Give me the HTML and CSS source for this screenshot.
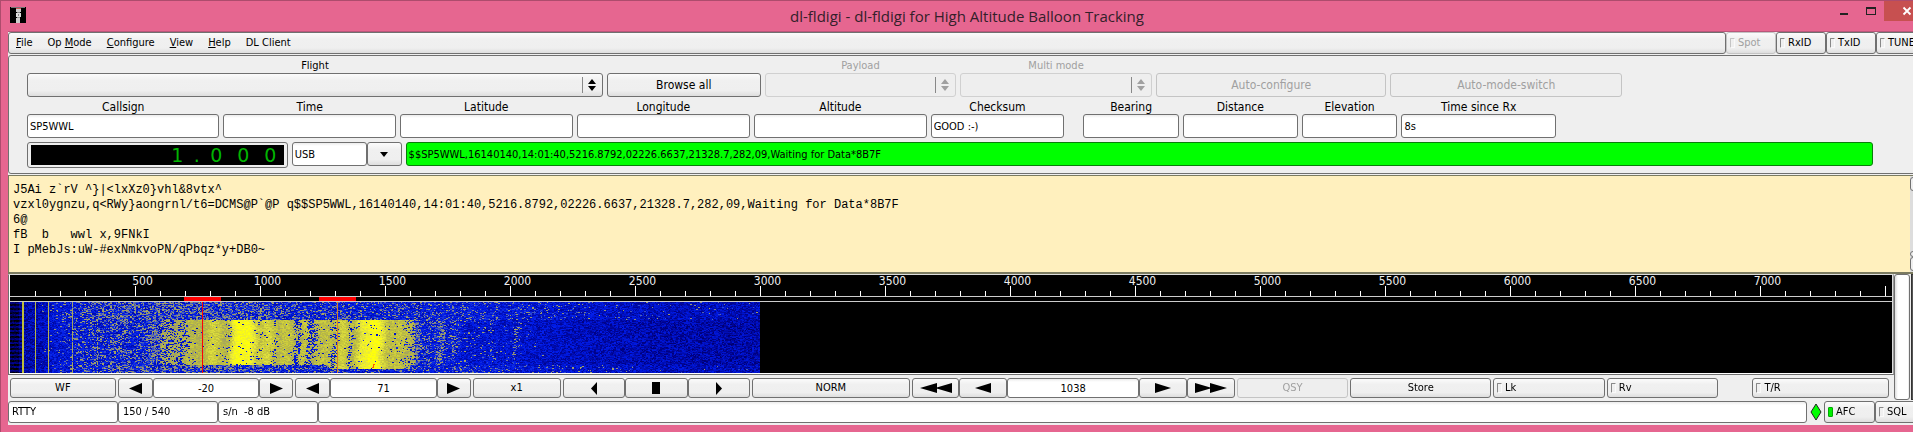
FILE: index.html
```html
<!DOCTYPE html>
<html lang="en">
<head>
<meta charset="utf-8">
<title>dl-fldigi</title>
<link rel="stylesheet" href="styles.css">
</head>
<body>
<div class="window">
  <header class="titlebar">
    <svg class="app-icon" width="16" height="16" viewBox="0 0 16 16" aria-hidden="true">
      <rect width="16" height="16" fill="#000"/>
      <rect x="1" width="14" height="1" fill="#777"/>
      <rect x="6" y="1" width="5" height="1" fill="#c55"/>
      <rect x="6" y="2" width="5" height="3" fill="#ccc"/>
      <rect x="7" y="5" width="3" height="1" fill="#888"/>
      <rect x="6" y="6" width="5" height="4" fill="#ddd"/>
      <rect x="8" y="7" width="1" height="2" fill="#888"/>
      <rect x="7" y="10" width="3" height="1" fill="#999"/>
      <rect x="6" y="11" width="4" height="5" fill="#ccc"/>
    </svg>
    <h1 class="title">dl-fldigi - dl-fldigi for High Altitude Balloon Tracking</h1>
    <div class="window-buttons">
      <button class="winbtn" aria-label="Minimize"><svg width="10" height="10" viewBox="0 0 10 10"><rect x="1" y="7" width="8" height="2" fill="#222"/></svg></button>
      <button class="winbtn" aria-label="Maximize"><svg width="10" height="10" viewBox="0 0 10 10"><path d="M0 1h10v8H0zM1 3v5h8V3z" fill="#222" fill-rule="evenodd"/></svg></button>
      <button class="winbtn close" aria-label="Close"><svg width="10" height="10" viewBox="0 0 10 10"><path d="M1.500 1.500l7 7m0-7l-7 7" stroke="#fff" stroke-width="1.800"/></svg></button>
    </div>
  </header>

  <div class="client">
    <div class="menurow">
      <nav class="menubar">
        <button class="menu"><u>F</u>ile</button>
        <button class="menu">Op <u>M</u>ode</button>
        <button class="menu"><u>C</u>onfigure</button>
        <button class="menu"><u>V</u>iew</button>
        <button class="menu"><u>H</u>elp</button>
        <button class="menu">DL Client</button>
      </nav>
      <label class="toggle disabled"><input type="checkbox" disabled>Spot</label>
      <label class="toggle"><input type="checkbox">RxID</label>
      <label class="toggle"><input type="checkbox">TxID</label>
      <label class="toggle"><input type="checkbox">TUNE</label>
    </div>

    <section class="panel">
      <div class="row flight-row">
        <div class="field small"><label for="flight">Flight</label>
          <div class="choice"><select id="flight"><option></option></select><svg class="updown" width="8" height="12" viewBox="0 0 8 12"><path d="M0 5L4 0l4 5zM0 7h8l-4 5z"/></svg></div></div>
        <button class="btn large">Browse all</button>
        <div class="field small disabled"><label for="payload">Payload</label>
          <div class="choice"><select id="payload" disabled><option></option></select><svg class="updown" width="8" height="12" viewBox="0 0 8 12"><path d="M0 5L4 0l4 5zM0 7h8l-4 5z"/></svg></div></div>
        <div class="field small disabled"><label for="multi">Multi mode</label>
          <div class="choice"><select id="multi" disabled><option></option></select><svg class="updown" width="8" height="12" viewBox="0 0 8 12"><path d="M0 5L4 0l4 5zM0 7h8l-4 5z"/></svg></div></div>
        <button class="btn large" disabled>Auto-configure</button>
        <button class="btn large" disabled>Auto-mode-switch</button>
      </div>

      <div class="row data-row">
        <div class="field"><label for="callsign">Callsign</label><input class="box" id="callsign" value="SP5WWL"></div>
        <div class="field"><label for="time">Time</label><input class="box" id="time"></div>
        <div class="field"><label for="lat">Latitude</label><input class="box" id="lat"></div>
        <div class="field"><label for="lon">Longitude</label><input class="box" id="lon"></div>
        <div class="field"><label for="alt">Altitude</label><input class="box" id="alt"></div>
        <div class="field"><label for="sum">Checksum</label><input class="box" id="sum" value="GOOD :-)"></div>
        <div class="field after-gap"><label for="bearing">Bearing</label><input class="box" id="bearing"></div>
        <div class="field"><label for="dist">Distance</label><input class="box" id="dist"></div>
        <div class="field"><label for="elev">Elevation</label><input class="box" id="elev"></div>
        <div class="field"><label for="since">Time since Rx</label><input class="box" id="since" value="8s"></div>
      </div>

      <div class="row rig-row">
        <div class="freq"><div class="digits"><span>1</span><span class="dot">.</span><span>0</span><span>0</span><span>0</span></div></div>
        <div class="combo"><input class="box" aria-label="Sideband" value="USB"><button class="btn" aria-label="Choose sideband"><svg width="8" height="5" viewBox="0 0 8 5"><path d="M0 0h8L4 5z"/></svg></button></div>
        <input class="box sentence" aria-label="Last sentence" value="$$SP5WWL,16140140,14:01:40,5216.8792,02226.6637,21328.7,282,09,Waiting for Data*8B7F">
      </div>
    </section>

    <div class="rx">
      <pre class="rx-text">J5Ai z`rV ^}|&lt;lxXz0}vhl&amp;8vtx^
vzxl0ygnzu,q&lt;RWy}aongrnl/t6=DCMS@P`@P q$$SP5WWL,16140140,14:01:40,5216.8792,02226.6637,21328.7,282,09,Waiting for Data*8B7F
6@
fB  b   wwl x,9FNkI
I pMebJs:uW-#exNmkvoPN/qPbqz*y+DB0~</pre>
      <div class="scroll"><i class="arrow"></i><i class="thumb"></i><i class="arrow"></i></div>
    </div>

    <div class="lower">
      <div class="left">
        <div class="waterfall">
          <div class="scale">
            <span>500</span><span>1000</span><span>1500</span><span>2000</span><span>2500</span><span>3000</span><span>3500</span><span>4000</span><span>4500</span><span>5000</span><span>5500</span><span>6000</span><span>6500</span><span>7000</span>
          </div>
          <div class="markers"><i></i><i></i></div>
          <canvas id="fall" width="750" height="71"></canvas>
        </div>
        <div class="controls">
          <button class="btn">WF</button>
          <div class="counter"><button class="btn" aria-label="Lower level"><svg width="13" height="11" viewBox="0 0 13 11"><path d="M0 5.500L13 0v11z"/></svg></button><input class="box" aria-label="Upper level" value="-20"><button class="btn" aria-label="Raise level"><svg width="13" height="11" viewBox="0 0 13 11"><path d="M13 5.500L0 0v11z"/></svg></button></div>
          <div class="counter"><button class="btn" aria-label="Lower range"><svg width="13" height="11" viewBox="0 0 13 11"><path d="M0 5.500L13 0v11z"/></svg></button><input class="box" aria-label="Range" value="71"><button class="btn" aria-label="Raise range"><svg width="13" height="11" viewBox="0 0 13 11"><path d="M13 5.500L0 0v11z"/></svg></button></div>
          <button class="btn">x1</button>
          <div class="shift"><button class="btn" aria-label="Left"><svg width="6" height="13" viewBox="0 0 6 13"><path d="M0 6.500L6 0v13z"/></svg></button><button class="btn" aria-label="Center"><svg width="8" height="12" viewBox="0 0 8 12"><path d="M0 0h8v12H0z"/></svg></button><button class="btn" aria-label="Right"><svg width="6" height="13" viewBox="0 0 6 13"><path d="M6 6.500L0 0v13z"/></svg></button></div>
          <button class="btn">NORM</button>
          <div class="counter wide"><button class="btn" aria-label="Much lower"><svg width="32" height="10" viewBox="0 0 32 10"><path d="M0 5L17 0v10zM15 5L32 0v10z"/></svg></button><button class="btn" aria-label="Lower"><svg width="16" height="10" viewBox="0 0 16 10"><path d="M0 5L16 0v10z"/></svg></button><input class="box" aria-label="Carrier" value="1038"><button class="btn" aria-label="Higher"><svg width="16" height="10" viewBox="0 0 16 10"><path d="M16 5L0 0v10z"/></svg></button><button class="btn" aria-label="Much higher"><svg width="32" height="10" viewBox="0 0 32 10"><path d="M32 5L15 0v10zM17 5L0 0v10z"/></svg></button></div>
          <button class="btn" disabled>QSY</button>
          <button class="btn">Store</button>
          <label class="toggle"><input type="checkbox">Lk</label>
          <label class="toggle"><input type="checkbox">Rv</label>
          <label class="toggle transmit"><input type="checkbox">T/R</label>
        </div>
      </div>
      <div class="squelch"></div>
      <div class="meter"></div>
    </div>

    <footer class="status">
      <output class="cell mode">RTTY</output>
      <output class="cell">150 / 540</output>
      <output class="cell">s/n &nbsp;-8 dB</output>
      <output class="cell message"></output>
      <svg class="diamond" width="12" height="18" viewBox="0 0 12 18"><path d="M6 1l5 8-5 8-5-8z" fill="#0f0" stroke="#222"/></svg>
      <label class="toggle"><input type="checkbox" checked>AFC</label>
      <label class="toggle"><input type="checkbox">SQL</label>
    </footer>
  </div>
</div>
<script src="waterfall.js"></script>
</body>
</html>
```
FILE: styles.css
```css
* { box-sizing: border-box; }

:root {
  --line: #707070;
  --face: #efefef;
  --up: linear-gradient(#fbfbfb, #f0f0f0 30%, #efefef 75%, #dedede);
}

body {
  margin: 0;
  overflow: hidden;
  font: 11px/14px "DejaVu Sans Condensed", "DejaVu Sans", sans-serif;
  color: #000;
}

button, input, select { font: inherit; color: inherit; margin: 0; min-width: 0; }
svg { display: block; }

/* The frame runs past the right edge of the screen. */
.window {
  width: calc(100% + 21px);
  background: #e66690;
  border: 1px solid #ad4c6d;
  padding: 0 7px 7px;
}

.titlebar {
  display: grid;
  grid-template-columns: 1fr auto 1fr;
  height: 30px;
}
.app-icon { margin: 6px 0 0 2px; }
.title {
  margin: 0;
  font: 15px/30px "Open Sans", "Noto Sans", sans-serif;
  color: #33202a;
}
.window-buttons { display: flex; justify-content: flex-end; align-items: flex-start; margin-right: -3px; }
.winbtn {
  display: flex;
  justify-content: center;
  align-items: center;
  width: 27px;
  height: 20px;
  padding: 0;
  border: 0;
  background: none;
}
.winbtn.close { width: 45px; background: #c75050; }

.client { background: var(--face); border-top: 1px solid #b9577a; padding-bottom: 2px; }

/* Shared pieces */
.btn {
  display: flex;
  justify-content: center;
  align-items: center;
  padding: 0;
  border: 1px solid var(--line);
  border-radius: 3px;
  background: var(--up);
}
.btn.large { font-size: 12px; }
.btn:disabled { color: #a0a0a0; border-color: #c4c4c4; background: #eee; }
.box {
  width: 100%;
  height: 24px;
  padding: 0 2px;
  border: 1px solid var(--line);
  border-radius: 3px;
  background: linear-gradient(#ececec, #fff 3px);
}
.toggle {
  display: flex;
  align-items: center;
  gap: 3px;
  padding-left: 3px;
  border: 1px solid var(--line);
  border-radius: 3px;
  background: var(--up);
  white-space: nowrap;
}
.toggle input {
  appearance: none;
  width: 5px;
  height: 10px;
  border: 1px solid #fafafa;
  border-top-color: #888;
  border-left-color: #888;
  border-radius: 1px;
}
.toggle input:checked { background: #00f000; border-color: #0a0; }
.toggle.disabled { color: #a0a0a0; border-color: #c4c4c4; }
.toggle.disabled input { border-top-color: #c4c4c4; border-left-color: #c4c4c4; }

/* Menu */
.menurow { display: flex; height: 22px; }
.menubar {
  flex: 1;
  display: flex;
  gap: 15px;
  padding-left: 7px;
  border: 1px solid var(--line);
  border-radius: 3px;
  background: var(--up);
}
.menu { padding: 0; border: 0; background: none; white-space: nowrap; }
.menurow .toggle { width: 50px; }

/* Flight panel */
.panel {
  display: grid;
  gap: 4px;
  margin-top: 1px;
  padding: 3px 52px 5px 18px;
  border: 1px solid var(--line);
  border-radius: 3px;
}
.row { display: grid; align-items: end; }
.field { display: grid; justify-items: center; font-size: 12px; }
.field.small { font-size: 11px; }
.field label { line-height: 14px; }
.field .box { font-size: 11px; }
.field.disabled { color: #a0a0a0; }

.flight-row { grid-template-columns: 577fr 154fr 192fr 192fr 231fr 232fr; gap: 4px; padding-right: 251px; }
.flight-row .btn, .choice { height: 24px; }
.choice { position: relative; width: 100%; }
.choice select {
  appearance: none;
  width: 100%;
  height: 24px;
  border: 1px solid var(--line);
  border-radius: 3px;
  background: var(--up);
}
.choice::after {
  content: "";
  position: absolute;
  right: 20px;
  top: 4px;
  height: 16px;
  border-left: 1px solid #888;
}
.updown { position: absolute; right: 7px; top: 6px; fill: currentColor; }
.disabled .choice select { border-color: #c4c4c4; background: #eee; }

.data-row { grid-template-columns: 193fr 173fr 173fr 174fr 173fr 134fr 111fr 115fr 96fr 155fr; gap: 4px; padding-right: 317px; }
.data-row .field label { line-height: 13px; }
.after-gap { padding-left: 15px; }

.rig-row { grid-template-columns: 261fr 110fr 1469fr; gap: 4px; align-items: start; }
.freq { height: 26px; padding: 2px 3px; border: 1px solid var(--line); border-radius: 3px; }
.digits {
  display: flex;
  justify-content: flex-end;
  height: 100%;
  background: #000;
  color: #00b400;
  font: 19px/21px "DejaVu Sans", sans-serif;
}
.digits span { width: 27px; text-align: center; }
.digits .dot { width: 12px; }
.combo { display: flex; }
.combo .btn { flex: 0 0 35px; }
.sentence { border-color: #0a7d0a; background: #0f0; }

/* Received text */
.rx {
  display: flex;
  height: 99px;
  margin-top: 1px;
  border: 1px solid #7b7b60;
  border-bottom-width: 2px;
  background: #fff0be;
}
.rx-text {
  flex: 1;
  margin: 0;
  padding: 7px 4px;
  font: 12px/15px "Liberation Mono", monospace;
}
.scroll { display: flex; flex-direction: column; width: 15px; padding: 1px 0; background: #ddd; }
.scroll i { border: 1px solid var(--line); border-radius: 3px; background: var(--face); }
.scroll .arrow { height: 14px; }
.scroll .thumb { margin-top: auto; height: 6px; }

/* Waterfall */
.lower { display: flex; padding-bottom: 1px; }
.left { flex: 1; min-width: 0; }
.waterfall {
  border: 1px solid var(--line);
  border-top-color: #ddd;
  border-right-color: #999;
  background: #000;
  box-shadow: inset 1px 0 #fff, inset 0 -1px #fff, inset -1px 0 #ddd;
  padding: 0 1px 1px;
}
.scale {
  display: flex;
  height: 22px;
  padding-left: 70px;
  border-bottom: 1px solid #ccc;
  color: #eee;
  font-size: 12px;
  line-height: 13px;
  background:
    linear-gradient(#000, #000) 0 100% / 1px 10px no-repeat,
    linear-gradient(90deg, #fff 1px, #0000 1px) 0 100% / 125px 10px repeat-x,
    linear-gradient(90deg, #fff 1px, #0000 1px) 0 100% / 25px 5px repeat-x;
}
.scale span { flex: 0 0 125px; text-align: center; }
.markers { display: flex; gap: 98px; height: 5px; padding-left: 174px; border-bottom: 1px solid #ccc; }
.markers i { width: 37px; background: #f00; }
#fall { display: block; }

.controls {
  display: grid;
  grid-template-columns: 106fr 176fr 176fr 88fr 188fr 158fr 324fr 112fr 141fr 112fr 112fr 169fr;
  gap: 2px;
  padding: 3px 5px 2px 2px;
}
.controls > * { height: 20px; }
.counter { display: grid; grid-template-columns: 35fr 107fr 34fr; }
.counter.wide { grid-template-columns: 48fr 48fr 132fr 48fr 48fr; }
.counter > *, .shift > * { height: 20px; }
.counter .box { text-align: center; }
.shift { display: grid; grid-template-columns: 1fr 1fr 1fr; }
.transmit { margin-left: 32px; }
.squelch {
  width: 16px;
  border: 1px solid var(--line);
  border-radius: 3px;
  background: linear-gradient(90deg, #ddd, #fff 3px, #fff 13px, #ddd);
}
.meter { width: 15px; margin-left: 1px; border: 1px solid #333; background: #555; }

/* Status line */
.status { display: flex; height: 22px; }
.cell {
  width: 100px;
  padding: 3px 4px;
  border: 1px solid var(--line);
  border-radius: 3px;
  background: linear-gradient(#ececec, #fff 3px);
}
.cell.mode { width: 110px; padding-left: 3px; }
.cell.message { flex: 1; }
.diamond { margin: 2px 2px 0 3px; }
.status .toggle { width: 51px; }
```
FILE: waterfall.js
```js
(function () {
  var canvas = document.getElementById('fall');
  var ctx = canvas.getContext('2d');
  var W = canvas.width, H = canvas.height;
  var image = ctx.createImageData(W, H);
  var seed = 20140601;

  function rnd() {
    seed = (seed * 1664525 + 1013904223) >>> 0;
    return seed / 4294967296;
  }

  // Signal strength to colour
  var stops = [
    [0, 0, 0, 0], [0.15, 0, 0, 130], [0.35, 0, 28, 235], [0.5, 50, 78, 205],
    [0.6, 140, 140, 125], [0.75, 190, 190, 62], [0.9, 232, 232, 60], [1, 255, 255, 10]
  ];
  function colour(v) {
    v = Math.max(0, Math.min(1, v));
    for (var i = 1; i < stops.length; i++) {
      if (v <= stops[i][0]) {
        var a = stops[i - 1], b = stops[i], t = (v - a[0]) / (b[0] - a[0]);
        return [a[1] + (b[1] - a[1]) * t, a[2] + (b[2] - a[2]) * t, a[3] + (b[3] - a[3]) * t];
      }
    }
    return [255, 255, 10];
  }

  function curve(points, x) {
    for (var i = 1; i < points.length; i++) {
      if (x <= points[i][0]) {
        var a = points[i - 1], b = points[i];
        return a[1] + (b[1] - a[1]) * (x - a[0]) / (b[0] - a[0]);
      }
    }
    return points[points.length - 1][1];
  }

  // Level of the quiet background, and how often a speckle rises out of it
  var floor = [[12, 0.22], [28, 0.24], [45, 0.31], [480, 0.33], [560, 0.29], [650, 0.26], [750, 0.25]];
  var speckle = [[28, 0], [45, 0.06], [70, 0.3], [105, 0.5], [200, 0.55], [260, 0.38], [350, 0.27],
    [420, 0.2], [480, 0.13], [560, 0.07], [640, 0.02], [750, 0.01]];
  var speckleInBand = [[28, 0], [45, 0.04], [70, 0.22], [105, 0.36], [140, 0.45], [152, 0.55],
    [165, 0.8], [185, 0.97], [388, 0.97], [402, 0.75], [410, 0.25], [450, 0.08], [500, 0.03], [540, 0]];
  // centre, half width, height
  var ridges = [[182, 8, 0.04], [203, 8, 0.13], [226, 7, 0.24], [238, 9, 0.26], [257, 7, 0.14],
    [276, 8, 0.08], [294, 5, 0.07], [314, 9, 0.07], [332, 7, 0.12], [352, 7, 0.18], [365, 9, 0.3],
    [388, 10, 0.08]];
  var density = [[287, 3, -0.6], [301, 4, -0.65], [324, 3, -0.4], [340, 2, -0.35], [172, 4, -0.35],
    [218, 3, -0.15], [249, 2, -0.1], [265, 2, -0.2], [132, 4, -0.15], [123, 3, -0.2],
    [143, 4, 0.3], [407, 3, 0.3], [418, 2, 0.25], [430, 4, 0.5], [443, 3, 0.25], [480, 2, 0.2],
    [505, 3, 0.35]];

  function bumps(list, x) {
    var sum = 0;
    for (var i = 0; i < list.length; i++) {
      var d = (x - list[i][0]) / list[i][1];
      if (d > -3 && d < 3) sum += list[i][2] * Math.exp(-d * d);
    }
    return sum;
  }

  function put(x, y, c) {
    var p = (y * W + x) * 4;
    image.data[p] = c[0];
    image.data[p + 1] = c[1];
    image.data[p + 2] = c[2];
    image.data[p + 3] = 255;
  }

  for (var y = 0; y < H; y++) {
    var pick = 0, n = 0;
    for (var x = 0; x < W; x++) {
      if (x % 2 === 0 || rnd() < 0.4) {
        pick = rnd();
        n = rnd() - 0.5;
      }
      var end = x > 318 && x < 400 ? 67 : 63;
      var inBand = y >= 18 && y < end;
      var sx = x + Math.sin(y / 7) * 1.5;
      var p = inBand ? curve(speckleInBand, x) + bumps(density, sx) : curve(speckle, x);
      var v;
      if (pick < p) {
        v = 0.58 + n * 0.22;
        if (inBand && x > 150 && x < 405) v = 0.69 + bumps(ridges, sx) + n * 0.13;
      } else {
        v = curve(floor, x) - (inBand && x > 450 ? 0.03 : 0) + n * 0.2;
      }
      if (x < 12) v = (y % 4 < 2 ? 0.14 : 0.03) + n * 0.1 + (x > 8 ? 0.08 : 0);
      put(x, y, colour(v));
    }
    put(12, y, [190, 190, 60]);
    put(13, y, [190, 190, 60]);
    put(25, y, [180, 180, 70]);
    put(38, y, [180, 180, 80]);
    if (rnd() < 0.9) put(62, y, [165, 165, 95]);
    if (y > 18 && rnd() < 0.7) put(87, y, [155, 155, 100]);
    put(192, y, [255, 0, 0]);
    put(327, y, [215, 125, 40]);
  }
  [[363, 62], [364, 62], [363, 63], [363, 64], [362, 65], [363, 65]].forEach(function (p) {
    put(p[0], p[1], [255, 90, 0]);
  });
  ctx.putImageData(image, 0, 0);
})();
```
